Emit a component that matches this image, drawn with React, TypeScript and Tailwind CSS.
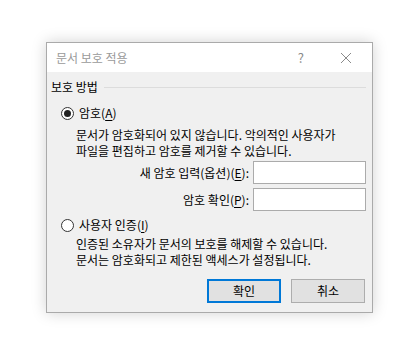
import React from "react";

function Radio({ checked }: { checked?: boolean }) {
  return (
    <span className="flex h-[13px] w-[13px] shrink-0 items-center justify-center rounded-full border border-[#333] bg-white">
      {checked && <span className="h-[7px] w-[7px] rounded-full bg-[#222]" />}
    </span>
  );
}

export default function App() {
  return (
    <div
      className="min-h-screen bg-white pl-[46px] pt-[42px] text-[12px] leading-[16px] text-black"
      style={{ fontFamily: '"Noto Sans CJK KR", "Noto Sans", sans-serif' }}
    >
      <div className="flex h-[271px] w-[327px] flex-col border border-[#aaaaaa] bg-[#f0f0f0] shadow-[0_0_14px_rgba(0,0,0,0.18)]">
        {/* Title bar */}
        <div className="flex h-[29px] shrink-0 items-center bg-white pl-[9px]">
          <span className="text-[#9a9a9a]">문서 보호 적용</span>
          <span className="ml-auto mr-[36px] text-[13px] text-[#8a8a8a]">?</span>
          <svg width="12" height="12" viewBox="0 0 12 12" className="mr-[20px]">
            <path d="M1 1 L11 11 M11 1 L1 11" stroke="#8a8a8a" strokeWidth="1" />
          </svg>
        </div>

        {/* Content */}
        <div className="flex flex-1 flex-col pl-[4px] pr-[6px]">
          <div className="mt-[7px] flex items-center">
            <span>보호 방법</span>
            <span className="ml-[6px] mt-[1px] h-px flex-1 bg-[#dcdcdc]" />
          </div>

          <div className="ml-[10px] mt-[10px] flex items-center gap-[5px]">
            <Radio checked />
            <span>
              암호(<span className="underline underline-offset-2">A</span>)
            </span>
          </div>

          <div className="ml-[25px] mt-[6px] leading-[16px]">
            <div>문서가 암호화되어 있지 않습니다. 악의적인 사용자가</div>
            <div>파일을 편집하고 암호를 제거할 수 있습니다.</div>
          </div>

          <div className="mt-[2px] flex items-center justify-end">
            <span className="mr-[4px]">
              새 암호 입력(옵션)(<span className="underline underline-offset-2">E</span>):
            </span>
            <div className="h-[23px] w-[113px] border border-[#ababab] bg-white" />
          </div>
          <div className="mt-[4px] flex items-center justify-end">
            <span className="mr-[4px]">
              암호 확인(<span className="underline underline-offset-2">P</span>):
            </span>
            <div className="h-[23px] w-[113px] border border-[#ababab] bg-white" />
          </div>

          <div className="ml-[10px] mt-[6px] flex items-center gap-[5px]">
            <Radio />
            <span>
              사용자 인증(<span className="underline underline-offset-2">I</span>)
            </span>
          </div>

          <div className="ml-[25px] mt-[3px] leading-[16px]">
            <div>인증된 소유자가 문서의 보호를 해제할 수 있습니다.</div>
            <div>문서는 암호화되고 제한된 액세스가 설정됩니다.</div>
          </div>

          <div className="mt-[11px] flex justify-end gap-[10px] pr-[1px]">
            <button className="flex h-[24px] w-[74px] items-center justify-center border-2 border-[#0078d7] bg-[#e1e1e1]">
              확인
            </button>
            <button className="flex h-[24px] w-[74px] items-center justify-center border border-[#adadad] bg-[#e1e1e1]">
              취소
            </button>
          </div>
        </div>
      </div>
    </div>
  );
}
